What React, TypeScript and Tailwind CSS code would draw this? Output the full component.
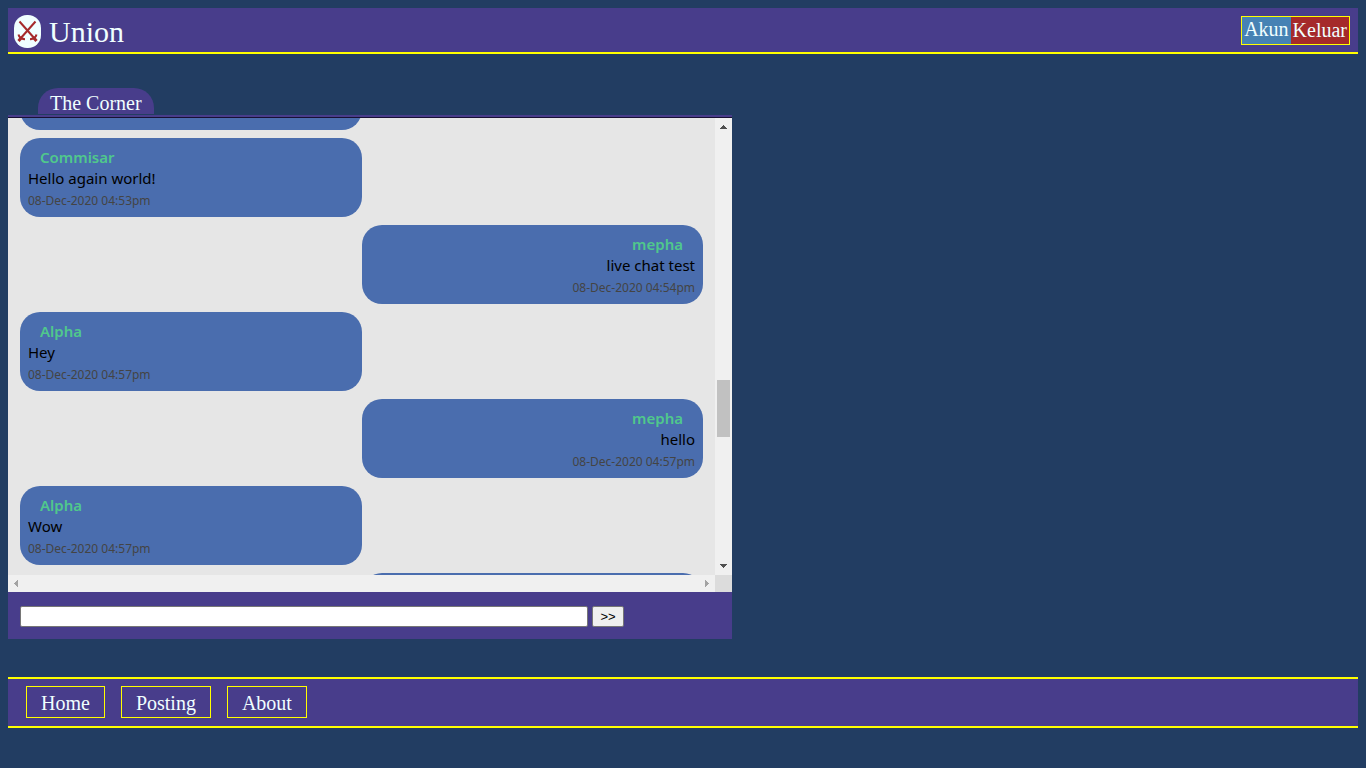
import React from "react";

type Message = { author?: string; text?: string; time?: string; mine?: boolean };

const messages: Message[] = [
  {},
  { author: "Commisar", text: "Hello again world!", time: "08-Dec-2020 04:53pm" },
  { author: "mepha", text: "live chat test", time: "08-Dec-2020 04:54pm", mine: true },
  { author: "Alpha", text: "Hey", time: "08-Dec-2020 04:57pm" },
  { author: "mepha", text: "hello", time: "08-Dec-2020 04:57pm", mine: true },
  { author: "Alpha", text: "Wow", time: "08-Dec-2020 04:57pm" },
  { mine: true },
];

function Logo() {
  return (
    <svg viewBox="0 0 27 33" className="h-[33px] w-[27px] shrink-0" aria-hidden="true">
      <rect width="27" height="33" rx="13" ry="13" fill="#f0ffff" />
      <g stroke="#a52a2a" fill="none">
        <path d="M5.5 6.5 21 24M21.5 6.5 6 24" strokeWidth="2" />
        <path d="M4.500 19.500c.3 1.800 1.200 2.800 2.500 3.500s2.500 1.200 4 1.200M22.500 19.500c-.3 1.800-1.200 2.800-2.500 3.500s-2.500 1.200-4 1.200" strokeWidth="2" />
        <path d="M7.500 22.500 4.500 26M19.500 22.500l3 3.500" strokeWidth="3" />
      </g>
    </svg>
  );
}

function Bubble({ message }: { message: Message }) {
  return (
    <li
      className={
        message.mine
          ? "min-h-[79px] w-1/2 shrink-0 self-end rounded-[20px] bg-[#4a6dae] px-2 pt-2 pb-[6px] text-right"
          : "min-h-[79px] w-1/2 shrink-0 self-start rounded-[20px] bg-[#4a6dae] px-2 pt-2 pb-[6px]"
      }
    >
      {message.author && (
        <>
          <p className="px-3 text-[15px] leading-[23px] font-semibold text-[#50c88c]">{message.author}</p>
          <p className="text-[15px] leading-[18px] text-black">{message.text}</p>
          <p className="mt-1 text-[12px] leading-[20px] text-[#444444]">{message.time}</p>
        </>
      )}
    </li>
  );
}

function Arrow({ points, fill }: { points: string; fill: string }) {
  return (
    <svg viewBox="0 0 17 17" className="size-[17px] shrink-0" shapeRendering="crispEdges" aria-hidden="true">
      <polygon points={points} fill={fill} />
    </svg>
  );
}

export default function App() {
  return (
    <div className="min-h-screen bg-[#223d62] p-2 font-['Liberation_Serif',serif] text-xl text-[#f0ffff]">
      <header className="flex items-center justify-between border-b-2 border-[#ffff00] bg-[#483d8b] pr-2 pl-[6px]">
        <a href="#" className="flex h-11 items-center gap-2 pt-[2px] text-[30px]">
          <Logo />
          <span className="pt-[2px]">Union</span>
        </a>
        <nav className="flex h-[29px] border border-[#ffff00] leading-[27px]">
          <a href="#akun" className="bg-[#4682b4] px-[2px] leading-[24px]">Akun</a>
          <a href="#keluar" className="bg-[#a52a2a] px-[2px]">Keluar</a>
        </nav>
      </header>

      <main className="mt-[34px] mb-[38px] w-[724px] max-w-full">
        <div className="flex pl-[30px]">
          <h1 className="h-[26px] rounded-t-[20px] bg-[#483d8b] px-3 leading-[31px]">The Corner</h1>
        </div>
        <div className="mt-px h-[3px] border-b border-[#191034] bg-[#483d8b]" />

        <section className="grid grid-cols-[1fr_17px] bg-[#f0f0f0]" aria-label="Messages">
          <div className="h-[457px] overflow-hidden bg-[#e6e6e6] px-3">
            <ul className="-mt-[67px] flex flex-col gap-2 font-['Noto_Sans',sans-serif]">
              {messages.map((message, i) => (
                <Bubble key={i} message={message} />
              ))}
            </ul>
          </div>
          <div className="flex flex-col items-center">
            <Arrow points="5,11 8,7 9,7 12,11" fill="#505050" />
            <div className="flex-1" />
            <div className="mb-[121px] h-[57px] w-[13px] bg-[#c1c1c1]" />
            <Arrow points="5,6 12,6 9,10 8,10" fill="#505050" />
          </div>
          <div className="flex justify-between">
            <Arrow points="10,5 10,12 6,9 6,8" fill="#a3a3a3" />
            <Arrow points="7,5 7,12 11,9 11,8" fill="#a3a3a3" />
          </div>
          <div className="bg-[#dcdcdc]" />
        </section>

        <form
          className="flex gap-1 bg-[#483d8b] px-3 pt-[14px] pb-3 font-['Liberation_Sans',sans-serif] text-[13px]"
          onSubmit={(e) => e.preventDefault()}
        >
          <input
            type="text"
            aria-label="Message"
            className="h-[21px] w-[568px] min-w-0 rounded-[2px] border border-[#767676] bg-white px-1 text-black"
          />
          <button
            type="submit"
            className="h-[21px] w-8 rounded-[2px] border border-[#767676] bg-[#efefef] leading-[19px] text-black"
          >
            &gt;&gt;
          </button>
        </form>
      </main>

      <footer className="border-y-2 border-[#ffff00] bg-[#483d8b] px-[18px] pt-[7px] pb-2">
        <nav className="flex gap-4 leading-[32px]">
          <a href="#home" className="h-8 border border-[#ffff00] px-[14px]">Home</a>
          <a href="#posting" className="h-8 border border-[#ffff00] px-[14px]">Posting</a>
          <a href="#about" className="h-8 border border-[#ffff00] px-[14px]">About</a>
        </nav>
      </footer>
    </div>
  );
}
